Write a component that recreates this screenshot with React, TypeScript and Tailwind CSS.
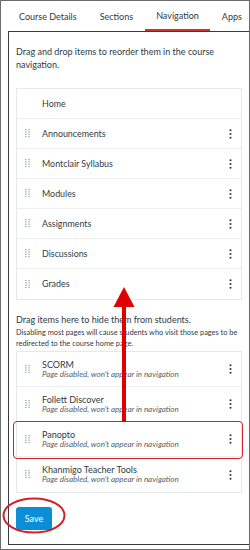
import React from "react";

const Handle = () => (
  <svg width="6" height="9" viewBox="0 0 6 9" className="shrink-0">
    {[0, 1, 2, 3].map((r) =>
      [0, 1].map((c) => (
        <rect key={`${r}-${c}`} x={c * 3.2 + 0.3} y={r * 2.3} width="1.2" height="1.2" fill="#8b969e" />
      ))
    )}
  </svg>
);

const Kebab = () => (
  <svg width="3" height="10" viewBox="0 0 3 10" className="shrink-0">
    <circle cx="1.5" cy="1.3" r="1.05" fill="#2d3b45" />
    <circle cx="1.5" cy="5" r="1.05" fill="#2d3b45" />
    <circle cx="1.5" cy="8.7" r="1.05" fill="#2d3b45" />
  </svg>
);

const navItems = ["Announcements", "Montclair Syllabus", "Modules", "Assignments", "Discussions", "Grades"];
const hidden = ["SCORM", "Follett Discover", "Panopto", "Khanmigo Teacher Tools"];

export default function App() {
  return (
    <div
      className="relative w-[250px] h-[550px] overflow-hidden bg-white border border-[#6b6b6b] text-[#2d3b45]"
      style={{ fontFamily: "Lato, 'Noto Sans', sans-serif" }}
    >
      {/* Tabs */}
      <div className="flex h-[30px] text-[9px] text-[#2d3b45] whitespace-nowrap">
        <div className="pl-[18px] pr-[11.5px] pt-[2px] h-[30px] flex items-center">Course Details</div>
        <div className="px-[11.5px] pt-[2px] h-[30px] flex items-center">Sections</div>
        <div className="px-[11.5px] pt-[2px] h-[30px] flex items-center border-b-2 border-[#d0342c]">Navigation</div>
        <div className="px-[11.5px] pt-[2px] h-[30px] flex items-center">Apps</div>
      </div>
      {/* Panel */}
      <div className="ml-[7px] border border-[#3a3a3a] border-r-0 h-[514px] px-[7px] pt-[13px]">
        <p className="text-[9px] leading-[13px] text-[#2d3b45]">
          Drag and drop items to reorder them in the course navigation.
        </p>
        <div className="mt-[17px] border border-[#e6e8ea] w-[226px]">
          <div className="h-[30px] flex items-center pl-[25px] text-[8.9px] border-b border-[#eceeef]">Home</div>
          {navItems.map((n, i) => (
            <div
              key={n}
              className={`h-[30px] flex items-center pl-[8px] pr-[9px] text-[8.9px] ${i < navItems.length - 1 ? "border-b border-[#eceeef]" : ""}`}
            >
              <Handle />
              <span className="ml-[11px] flex-1">{n}</span>
              <Kebab />
            </div>
          ))}
        </div>
        <p className="mt-[13px] text-[9px] leading-[13px]">Drag items here to hide them from students.</p>
        <p className="mt-[1px] text-[7.4px] leading-[11px]">
          Disabling most pages will cause students who visit those pages to be redirected to the course home page.
        </p>
        <div className="mt-[2px] border border-[#e6e8ea] w-[226px]">
          {hidden.map((n, i) => (
            <div
              key={n}
              className={`relative h-[35px] flex items-center pl-[8px] pr-[9px] ${i < hidden.length - 1 ? "border-b border-[#eceeef]" : ""}`}
            >
              <Handle />
              <div className="ml-[11px] flex-1 flex flex-col">
                <span className="text-[9px] leading-[10px]">{n}</span>
                <span className="text-[8px] leading-[9px] italic text-[#56626b]">
                  Page disabled, won't appear in navigation
                </span>
              </div>
              <Kebab />
              {n === "Panopto" && (
                <div className="absolute left-[-4px] right-[-2px] top-[-1px] bottom-[-3px] border-[1.5px] border-[#d0212b] rounded-[4px] pointer-events-none" />
              )}
            </div>
          ))}
        </div>
        <div className="relative mt-[11px] w-fit">
          <button className="h-[23px] w-[36px] rounded-[3px] bg-[#0b8ed6] text-white text-[9px]">Save</button>
          <svg className="absolute left-[-14px] top-[-7px] pointer-events-none" width="64" height="37" viewBox="0 0 64 37">
            <ellipse cx="32" cy="18.5" rx="30.5" ry="17" fill="none" stroke="#d0212b" strokeWidth="2" />
          </svg>
        </div>
      </div>
      {/* Arrow */}
      <svg className="absolute left-0 top-0 pointer-events-none" width="250" height="550" viewBox="0 0 250 550">
        <rect x="121" y="300" width="4" height="121" fill="#e00000" />
        <polygon points="123,286 112.5,306 133.5,306" fill="#e00000" />
      </svg>
    </div>
  );
}
